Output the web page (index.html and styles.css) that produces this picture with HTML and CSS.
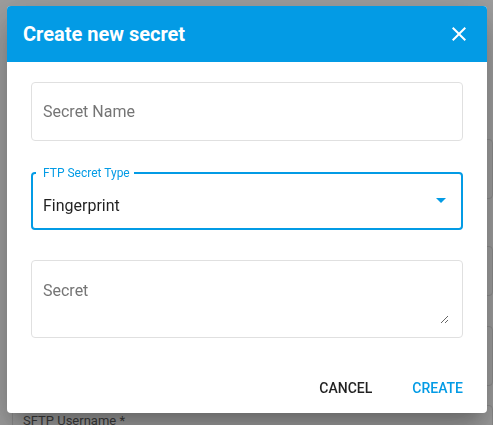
FILE: index.html
```html
<!DOCTYPE html>
<html lang="en">
<head>
<meta charset="utf-8">
<title>Create new secret</title>
<link rel="stylesheet" href="styles.css">
</head>
<body>
<div class="page">
  <div class="bg-field bg-f1"></div>
  <div class="bg-field bg-f2"></div>
  <div class="bg-field bg-f3"></div>
  <div class="bg-field bg-f4"><span class="bg-label">SFTP Username *</span></div>
</div>
<div class="overlay">
  <div class="dialog">
    <div class="dialog-header">
      <h2 class="dialog-title">Create new secret</h2>
      <button class="close-btn" aria-label="Close">
        <svg viewBox="0 0 24 24" width="24" height="24"><path fill="#fff" d="M19 6.41L17.59 5 12 10.59 6.41 5 5 6.41 10.59 12 5 17.59 6.41 19 12 13.41 17.59 19 19 17.59 13.41 12z"/></svg>
      </button>
    </div>
    <div class="dialog-body">
      <div class="field">
        <span class="placeholder">Secret Name</span>
      </div>
      <div class="field field-select">
        <span class="float-label">FTP Secret Type</span>
        <span class="value">Fingerprint</span>
        <span class="arrow"></span>
      </div>
      <div class="field field-area">
        <textarea class="area" placeholder="Secret"></textarea>
      </div>
    </div>
    <div class="dialog-actions">
      <button class="btn btn-cancel">Cancel</button>
      <button class="btn btn-create">Create</button>
    </div>
  </div>
</div>
</body>
</html>
```

FILE: styles.css
```css
* { box-sizing: border-box; }
html, body { margin: 0; padding: 0; }
body {
  width: 493px;
  height: 425px;
  overflow: hidden;
  background: #fff;
  font-family: Roboto, "Liberation Sans", sans-serif;
}
.page {
  height: 425px;
  overflow: hidden;
  padding-left: 12px;
}
.bg-field {
  border: 1px solid #e3e3e3;
  border-radius: 4px;
}
.bg-f1 { margin-top: 139px; height: 60px; }
.bg-f2 { margin-top: 47px; height: 50px; }
.bg-f3 { margin-top: 30px; height: 60px; }
.bg-f4 { margin-top: 19px; height: 30px; padding: 4px 0 0 10px; }
.bg-label {
  font-size: 13px;
  line-height: 15px;
  color: #616161;
}
.overlay {
  position: fixed;
  inset: 0;
  background: rgba(0, 0, 0, 0.38);
  padding: 6px 0 0 7px;
}
.dialog {
  width: 480px;
  background: #fff;
  border-radius: 4px;
  overflow: hidden;
  box-shadow: 0 11px 15px -7px rgba(0,0,0,.2), 0 24px 38px 3px rgba(0,0,0,.14), 0 9px 46px 8px rgba(0,0,0,.12);
}
.dialog-header {
  height: 56px;
  background: #039be5;
  display: flex;
  align-items: center;
  justify-content: space-between;
  padding: 0 16px 0 16px;
}
.dialog-title {
  margin: 0;
  color: #fff;
  font-size: 20px;
  font-weight: 700;
  line-height: 24px;
}
.close-btn {
  border: 0;
  background: none;
  padding: 0;
  width: 24px;
  height: 24px;
  display: flex;
}
.dialog-body {
  padding: 20px 24px 24px 24px;
  display: flex;
  flex-direction: column;
}
.field {
  position: relative;
  border: 1px solid #e0e0e0;
  border-radius: 4px;
  height: 59px;
  display: flex;
  align-items: center;
  padding: 0 11px;
  font-size: 16px;
}
.placeholder { color: #757575; }
.field-select {
  margin-top: 31px;
  height: 58px;
  border: 2px solid #039be5;
  padding: 8px 10px 0 10px;
}
.float-label {
  position: absolute;
  left: 3px;
  top: -7px;
  padding: 0 4px 0 7px;
  background: #fff;
  color: #039be5;
  font-size: 12px;
  line-height: 12px;
}
.value {
  flex: 1;
  color: rgba(0, 0, 0, 0.87);
}
.arrow {
  width: 0;
  height: 0;
  border-left: 5px solid transparent;
  border-right: 5px solid transparent;
  border-top: 5px solid #039be5;
  margin-right: 5px;
  margin-top: -10px;
}
.field-area {
  margin-top: 30px;
  height: 78px;
  display: block;
  padding: 20px 13px 13px 11px;
}
.area {
  display: block;
  width: 100%;
  height: 43px;
  border: 0;
  outline: none;
  padding: 0;
  margin: 0;
  resize: vertical;
  font-family: inherit;
  font-size: 16px;
  line-height: 19px;
  color: rgba(0, 0, 0, 0.87);
}
.area::placeholder { color: #757575; opacity: 1; }
.dialog-actions {
  display: flex;
  justify-content: flex-end;
  gap: 24px;
  padding: 8px 16px 7px 16px;
}
.btn {
  border: 0;
  background: none;
  height: 36px;
  padding: 0 8px;
  font-family: inherit;
  font-size: 14px;
  font-weight: 500;
  text-transform: uppercase;
}
.btn-cancel { color: rgba(0, 0, 0, 0.87); }
.btn-create { color: #039be5; }
```
